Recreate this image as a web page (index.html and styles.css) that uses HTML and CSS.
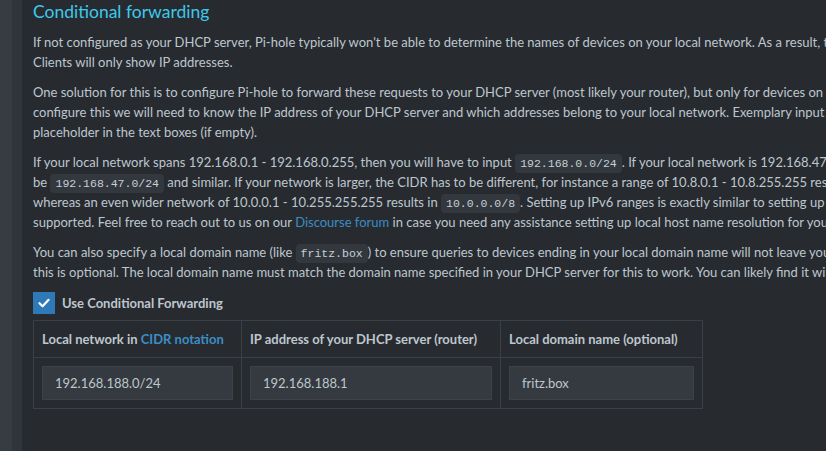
FILE: index.html
```html
<!DOCTYPE html>
<html lang="en">
<head>
    <meta charset="UTF-8">
    <meta name="viewport" content="width=device-width, initial-scale=1.0">
    <title>Conditional forwarding</title>
    <link rel="stylesheet" href="styles.css">
</head>
<body>
    <div class="page">
        <aside class="sidebar"></aside>
        <div class="sidebar-edge"></div>
        <main class="content">
            <h3 class="box-title">Conditional forwarding</h3>
            <p>If not configured as your DHCP server, Pi-hole typically won't be able to determine the names of devices on your local network. As a result, tables such as Top<br>
            Clients will only show IP addresses.</p>
            <p>One solution for this is to configure Pi-hole to forward these requests to your DHCP server (most likely your router), but only for devices on your home network. To<br>
            configure this we will need to know the IP address of your DHCP server and which addresses belong to your local network. Exemplary input is given below as<br>
            placeholder in the text boxes (if empty).</p>
            <p>If your local network spans 192.168.0.1 - 192.168.0.255, then you will have to input <code>192.168.0.0/24</code>. If your local network is 192.168.47.1 - 192.168.47.255, it will<br>
            be <code>192.168.47.0/24</code> and similar. If your network is larger, the CIDR has to be different, for instance a range of 10.8.0.1 - 10.8.255.255 results in <code>10.8.0.0/16</code>,<br>
            whereas an even wider network of 10.0.0.1 - 10.255.255.255 results in <code>10.0.0.0/8</code>. Setting up IPv6 ranges is exactly similar to setting up IPv4 here and fully<br>
            supported. Feel free to reach out to us on our <a href="#">Discourse forum</a> in case you need any assistance setting up local host name resolution for your particular system.</p>
            <p>You can also specify a local domain name (like <code>fritz.box</code>) to ensure queries to devices ending in your local domain name will not leave your network, however,<br>
            this is optional. The local domain name must match the domain name specified in your DHCP server for this to work. You can likely find it within the DHCP settings.</p>

            <label class="check-row">
                <span class="checkbox">
                    <svg width="14" height="14" viewBox="0 0 14 14"><path d="M2.5 7.2 L5.6 10.2 L11.6 3.8" fill="none" stroke="#fff" stroke-width="2.2" stroke-linecap="round" stroke-linejoin="round"/></svg>
                </span>
                Use Conditional Forwarding
            </label>

            <table class="cf-table">
                <thead>
                    <tr>
                        <th class="col-net">Local network in <a href="#">CIDR notation</a></th>
                        <th class="col-ip">IP address of your DHCP server (router)</th>
                        <th class="col-domain">Local domain name (optional)</th>
                    </tr>
                </thead>
                <tbody>
                    <tr>
                        <td><input type="text" value="192.168.188.0/24"></td>
                        <td><input type="text" value="192.168.188.1"></td>
                        <td><input type="text" value="fritz.box"></td>
                    </tr>
                </tbody>
            </table>
        </main>
    </div>
</body>
</html>
```

FILE: styles.css
```css
html, body {
    margin: 0;
    padding: 0;
    height: 100%;
    overflow: hidden;
}
body {
    background-color: #272b30;
    color: #bec6ce;
    font-family: "Lato", "Liberation Sans", sans-serif;
    font-size: 13px;
    line-height: 20px;
}
.page {
    display: flex;
    height: 100%;
}
.sidebar {
    width: 12px;
    flex-shrink: 0;
    background-color: #353c43;
}
.sidebar-edge {
    width: 10px;
    flex-shrink: 0;
    background-color: #2f353b;
}
.content {
    flex-shrink: 0;
    padding-left: 11px;
}
.box-title {
    margin: 0 0 9px;
    padding-top: 1px;
    font-size: 17.5px;
    font-weight: normal;
    line-height: 22px;
    color: #3dc9ec;
}
p {
    margin: 0 0 10px;
    white-space: nowrap;
}
a {
    color: #3c8dc4;
    text-decoration: none;
}
code {
    font-family: "Liberation Mono", monospace;
    font-size: 11.5px;
    line-height: 1;
    background-color: #32383e;
    color: #c8cfd6;
    padding: 3px 5px;
    border-radius: 4px;
}
.check-row {
    display: flex;
    align-items: center;
    gap: 7px;
    font-weight: bold;
    margin-top: 10px;
    height: 22px;
}
.checkbox {
    width: 22px;
    height: 22px;
    background-color: #3079b8;
    display: flex;
    align-items: center;
    justify-content: center;
}
.cf-table {
    border-collapse: collapse;
    margin-top: 6px;
}
.cf-table th, .cf-table td {
    border: 1px solid #3a4046;
    padding: 8px;
    text-align: left;
    white-space: nowrap;
}
.cf-table th {
    height: 20px;
}
.col-net { width: 191px; }
.col-ip { width: 242px; }
.col-domain { width: 185px; }
.cf-table input {
    display: block;
    box-sizing: border-box;
    width: 100%;
    height: 34px;
    padding: 0 12px;
    background-color: #343a40;
    border: 1px solid #3c4248;
    color: #bec6ce;
    font-family: inherit;
    font-size: 13px;
    outline: none;
}
```
